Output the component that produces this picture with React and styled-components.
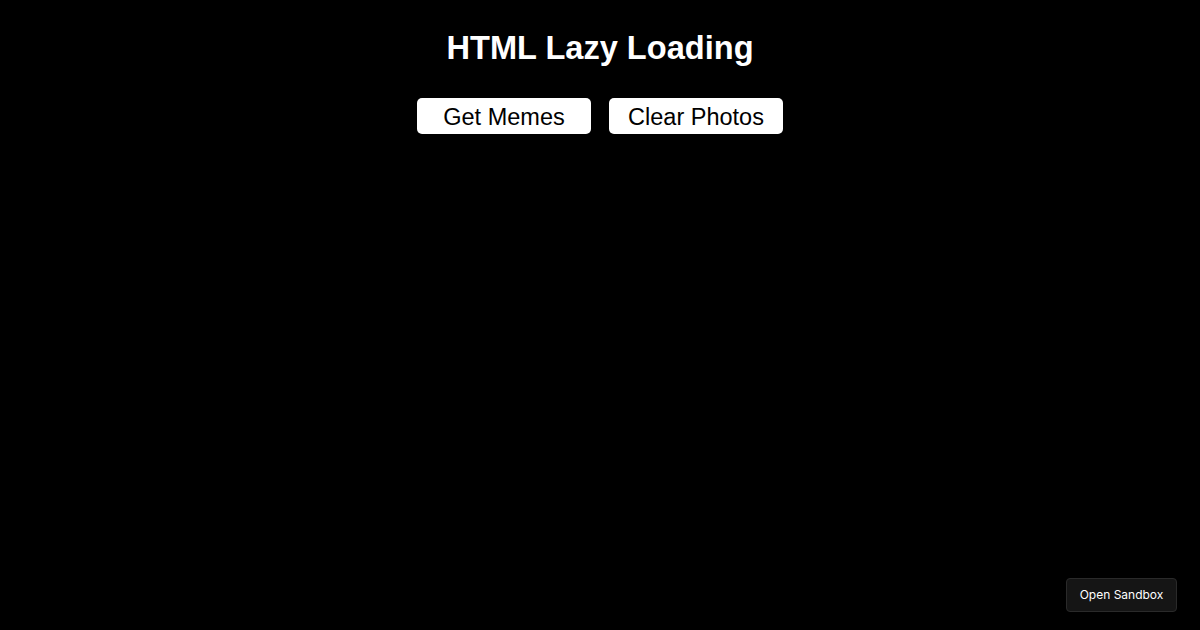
import React from 'react';
import styled, { createGlobalStyle } from 'styled-components';

const GlobalStyle = createGlobalStyle`
  html, body {
    margin: 0;
    padding: 0;
    background: #000;
    height: 100%;
  }
  body {
    font-family: "Liberation Sans", Arial, sans-serif;
    color: #fff;
  }
`;

const Page = styled.div`
  display: flex;
  flex-direction: column;
  align-items: center;
  padding-top: 8px;
`;

const Title = styled.h1`
  font-size: 32.6px;
  font-weight: bold;
  margin: 21px 0 0;
  line-height: 37px;
`;

const Actions = styled.div`
  display: flex;
  gap: 18px;
  margin-top: 32px;
`;

const ActionButton = styled.button`
  width: 174px;
  height: 36px;
  background: #fff;
  color: #000;
  border: none;
  border-radius: 5px;
  font-family: "Liberation Sans", Arial, sans-serif;
  font-size: 23.5px;
  padding: 2px 0 0;
  cursor: pointer;
`;

const SandboxLink = styled.a`
  position: fixed;
  right: 23px;
  bottom: 18px;
  display: flex;
  align-items: center;
  justify-content: center;
  width: 111px;
  height: 34px;
  box-sizing: border-box;
  padding-bottom: 1px;
  background: #151515;
  border: 1px solid #2a2a2a;
  border-radius: 4px;
  color: #fff;
  font-family: Inter, "Liberation Sans", sans-serif;
  font-size: 12px;
  text-decoration: none;
`;

export default function App () {
	return (
		<>
			<GlobalStyle/>
			<Page>
				<Title>HTML Lazy Loading</Title>
				<Actions>
					<ActionButton>Get Memes</ActionButton>
					<ActionButton>Clear Photos</ActionButton>
				</Actions>
			</Page>
			<SandboxLink href="#">Open Sandbox</SandboxLink>
		</>
	);
}
